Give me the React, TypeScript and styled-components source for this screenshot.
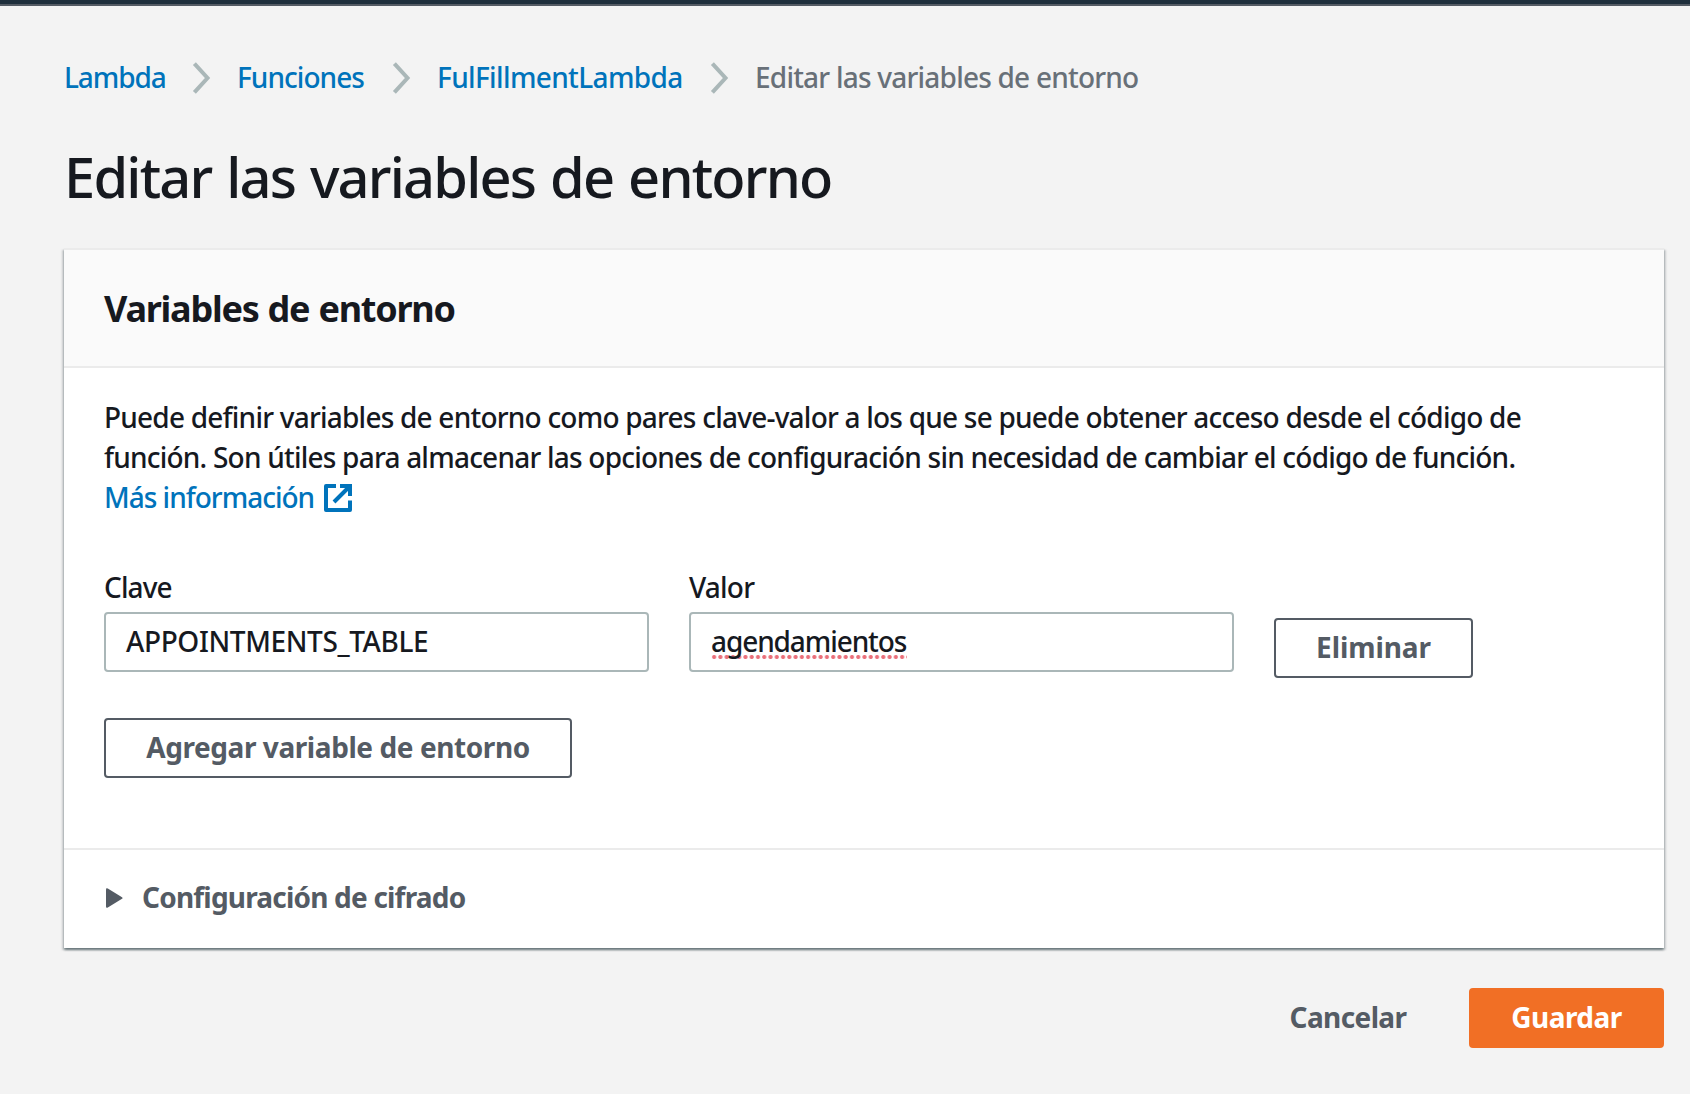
import React, { Fragment } from 'react';
import styled, { createGlobalStyle } from 'styled-components';

const GlobalStyle = createGlobalStyle`
  *, *::before, *::after { box-sizing: border-box; }
  body {
    margin: 0;
    background: #f3f3f3;
    color: #16191f;
    font-family: "Noto Sans", "Open Sans", sans-serif;
    font-size: 28px;
    font-weight: 500;
    line-height: 40px;
    overflow: hidden;
  }
`;

const TopBar = styled.div`
  height: 6px;
  background: #1f2f3c;
  border-bottom: 2px solid #545b64;
`;

const Page = styled.main`
  padding: 51px 26px 0 64px;
`;

const Text = styled.span<{ $track?: number }>`
  letter-spacing: ${(p) => p.$track ?? -0.78}px;
  white-space: nowrap;
`;

const Breadcrumbs = styled.nav`
  display: flex;
  align-items: center;
  height: 40px;
`;

const CrumbLink = styled.a<{ $track: number; $width: number }>`
  width: ${(p) => p.$width}px;
  color: #0073bb;
  letter-spacing: ${(p) => p.$track}px;
  text-decoration: none;
  white-space: nowrap;
`;

const CrumbCurrent = styled(Text)`
  color: #687078;
`;

const Chevron = styled.svg`
  flex: none;
  width: 19px;
  height: 32px;
  margin: 2px 26px 0 0;
  fill: none;
  stroke: #aab7b8;
  stroke-width: 4;
`;

const Title = styled.h1`
  margin: 49px 0 42px;
  font-size: 56px;
  font-weight: 500;
  line-height: 60px;
  letter-spacing: -1.8px;
  word-spacing: 2px;
`;

const Card = styled.section`
  background: #fff;
  box-shadow: 0 2px 2px 0 rgba(0, 28, 36, 0.4), 2px 2px 2px 0 rgba(0, 28, 36, 0.15),
    -2px 2px 2px 0 rgba(0, 28, 36, 0.15);
`;

const CardHeader = styled.header`
  display: flex;
  align-items: center;
  height: 120px;
  padding: 2px 40px 0;
  background: #fafafa;
  border-top: 2px solid #ebebeb;
  border-bottom: 2px solid #ebebeb;
`;

const CardTitle = styled.h2`
  margin: 0;
  font-size: 36px;
  font-weight: 700;
  line-height: 44px;
  letter-spacing: -1.25px;
  word-spacing: 1px;
`;

const CardBody = styled.div`
  height: 480px;
  padding: 29px 40px 0;
`;

const Description = styled.p`
  display: flex;
  flex-direction: column;
  margin: 0 0 50px;
`;

const InfoLink = styled.a`
  display: flex;
  align-items: center;
  color: #0073bb;
  text-decoration: none;
`;

const InfoLabel = styled(Text)`
  width: 218px;
`;

const ExternalIcon = styled.svg`
  width: 32px;
  height: 32px;
  margin-top: 2px;
  fill: none;
  stroke: #0073bb;
  stroke-width: 2;
`;

const VariableRow = styled.div`
  display: flex;
  align-items: flex-end;
  gap: 40px;
  margin-bottom: 40px;
`;

const Field = styled.div`
  display: flex;
  flex-direction: column;
  gap: 5px;
  width: 545px;
  margin-bottom: 6px;
`;

const Input = styled.div`
  display: flex;
  height: 60px;
  padding: 0 20px;
  border: 2px solid #aab7b8;
  border-radius: 4px;
  background: #fff;
  line-height: 54px;
`;

const Misspelled = styled(Text)`
  width: 196px;
  height: 54px;
  background: radial-gradient(circle, #ea6f7a 1.6px, transparent 2.5px) 0 40px / 6.27px 6px repeat-x;
`;

const Button = styled.button<{ $variant?: 'normal' | 'primary' | 'link'; $width: number; $track: number }>`
  width: ${(p) => p.$width}px;
  height: 60px;
  padding: 0 0 2px;
  border: 2px solid
    ${(p) => (p.$variant === 'primary' ? '#f16f25' : p.$variant === 'link' ? 'transparent' : '#545b64')};
  border-radius: 4px;
  background: ${(p) => (p.$variant === 'primary' ? '#f16f25' : p.$variant === 'link' ? 'transparent' : '#fff')};
  color: ${(p) => (p.$variant === 'primary' ? '#fff' : '#545b64')};
  font: inherit;
  font-weight: 700;
  letter-spacing: ${(p) => p.$track}px;
  white-space: nowrap;
`;

const Expander = styled.div`
  display: flex;
  align-items: center;
  height: 100px;
  padding: 0 40px 4px 42px;
  border-top: 2px solid #ebebeb;
  color: #545b64;
  font-weight: 700;
`;

const Triangle = styled.svg`
  width: 17px;
  height: 20px;
  margin: 2px 19px 0 0;
  fill: #545b64;
`;

const Actions = styled.footer`
  display: flex;
  justify-content: flex-end;
  gap: 21px;
  margin-top: 40px;
`;

const crumbs = [
  { label: 'Lambda', track: -1.1, width: 128 },
  { label: 'Funciones', track: -0.95, width: 155 },
  { label: 'FulFillmentLambda', track: -0.64, width: 273 },
];

export default function App() {
  return (
    <>
      <GlobalStyle />
      <TopBar />
      <Page>
        <Breadcrumbs>
          {crumbs.map((c) => (
            <Fragment key={c.label}>
              <CrumbLink $track={c.track} $width={c.width}>{c.label}</CrumbLink>
              <Chevron viewBox="0 0 19 32">
                <path d="M2.4 1.7 15.5 16 2.4 30.3" />
              </Chevron>
            </Fragment>
          ))}
          <CrumbCurrent>Editar las variables de entorno</CrumbCurrent>
        </Breadcrumbs>
        <Title>Editar las variables de entorno</Title>
        <Card>
          <CardHeader>
            <CardTitle>Variables de entorno</CardTitle>
          </CardHeader>
          <CardBody>
            <Description>
              <Text>Puede definir variables de entorno como pares clave-valor a los que se puede obtener acceso desde el código de</Text>
              <Text>función. Son útiles para almacenar las opciones de configuración sin necesidad de cambiar el código de función.</Text>
              <InfoLink>
                <InfoLabel $track={-1}>Más información</InfoLabel>
                <ExternalIcon viewBox="0 0 16 16">
                  <path d="M9 2h5v5M6 10l8-8" />
                  <path strokeLinejoin="round" d="M14 9.2V14H2V2h5" />
                </ExternalIcon>
              </InfoLink>
            </Description>
            <VariableRow>
              <Field>
                <Text $track={-0.9}>Clave</Text>
                <Input><Text $track={-0.38}>APPOINTMENTS_TABLE</Text></Input>
              </Field>
              <Field>
                <Text $track={-0.8}>Valor</Text>
                <Input><Misspelled $track={-1.1}>agendamientos</Misspelled></Input>
              </Field>
              <Button $width={199} $track={-0.1}>Eliminar</Button>
            </VariableRow>
            <Button $width={468} $track={-0.42}>Agregar variable de entorno</Button>
          </CardBody>
          <Expander>
            <Triangle viewBox="0 0 17 20">
              <path d="M0 1.6Q0-.4 1.8.6L16 9.2Q17.2 10 16 10.8L1.8 19.4Q0 20.4 0 18.4Z" />
            </Triangle>
            <Text $track={-0.8}>Configuración de cifrado</Text>
          </Expander>
        </Card>
        <Actions>
          <Button $variant="link" $width={200} $track={-0.6}>Cancelar</Button>
          <Button $variant="primary" $width={195} $track={-0.55}>Guardar</Button>
        </Actions>
      </Page>
    </>
  );
}
